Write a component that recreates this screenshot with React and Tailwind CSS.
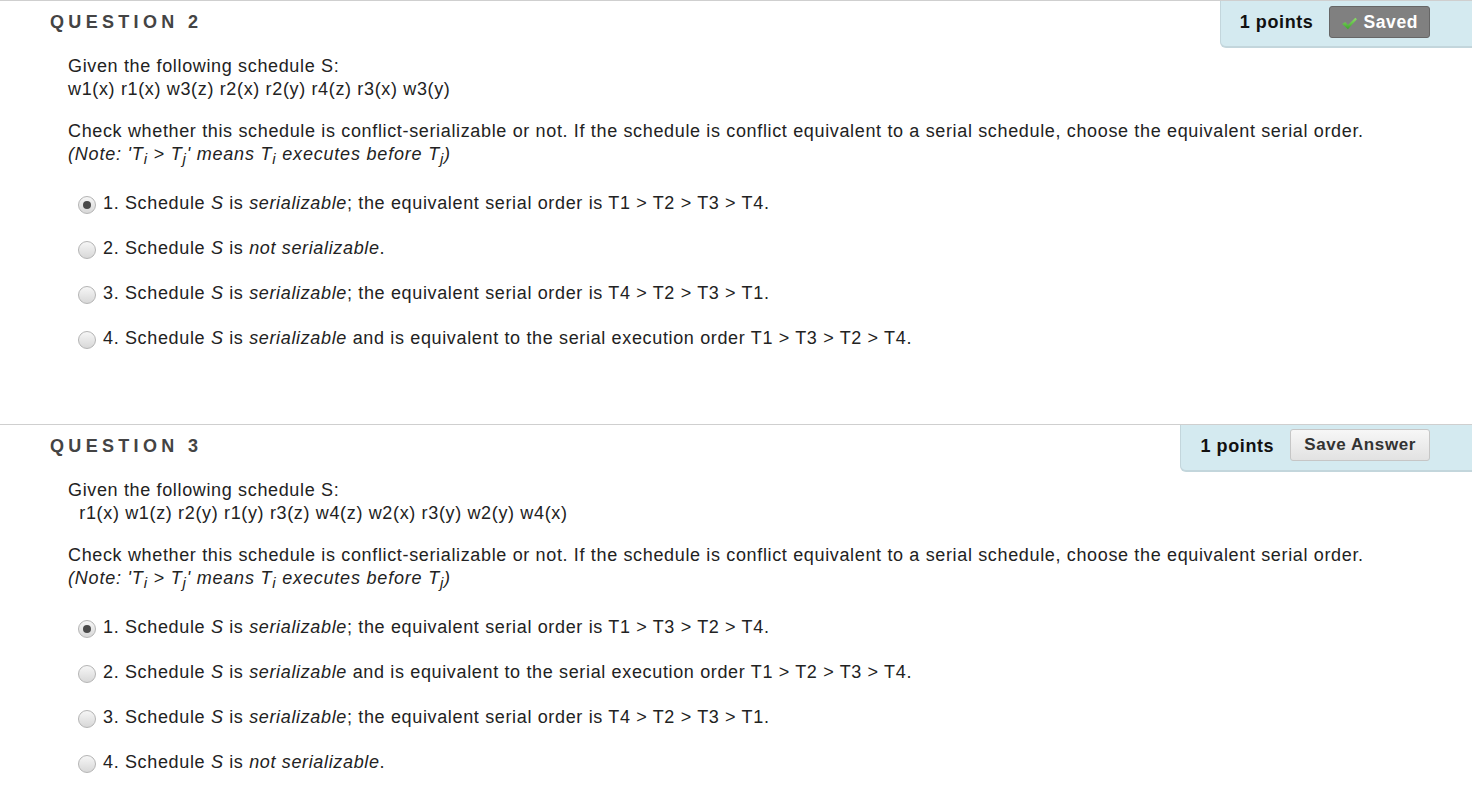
import { useState } from "react";

const font = { fontFamily: '"Liberation Sans", Arial, sans-serif' };

function Radio({ checked }) {
  return (
    <span className="mt-[4px] flex h-[18px] w-[18px] shrink-0 items-center justify-center rounded-full border border-[#b4b4b4] bg-gradient-to-b from-[#f6f6f6] to-[#d8d8d8]">
      {checked && <span className="h-[8px] w-[8px] rounded-full bg-[#4a4a4a]" />}
    </span>
  );
}

function Note() {
  return (
    <p className="italic tracking-[0.8px]">
      (Note: 'T<sub className="text-[15px]">i</sub> &gt; T<sub className="text-[15px]">j</sub>' means T
      <sub className="text-[15px]">i</sub> executes before T<sub className="text-[15px]">j</sub>)
    </p>
  );
}

function Check() {
  return (
    <svg width="17" height="15" viewBox="0 0 16 14" className="mr-[5px] mt-[2px]">
      <defs>
        <linearGradient id="chk" x1="0" y1="0" x2="0" y2="1">
          <stop offset="0" stopColor="#8fe06a" />
          <stop offset="1" stopColor="#3aa32a" />
        </linearGradient>
      </defs>
      <path d="M1 7.5 L4 5.5 L6.5 8.5 L13.5 1.5 L15 3 L6.5 12.5 Z" fill="url(#chk)" />
    </svg>
  );
}

function Question({ num, saved, schedule, options, selected }) {
  return (
    <section className="border-t border-[#cfcfcf]">
      <div className="flex items-start justify-between">
        <h2 className="pl-[50px] pt-[8px] text-[18px] font-bold tracking-[0.24em] text-[#444]">
          QUESTION {num}
        </h2>
        <div className="flex h-[47px] items-start gap-[16px] rounded-bl-[6px] border-b-2 border-l border-[#c3d6dc] bg-[#d4eaf0] pl-[19px] pr-[42px] tracking-[0.6px]">
          <span className="pt-[8px] text-[18px] font-bold text-[#111]">1 points</span>
          {saved ? (
            <button className="mt-[5px] flex h-[32px] items-center rounded-[3px] border border-[#666] bg-[#808080] px-[11px] text-[17.5px] font-bold tracking-[0.6px] text-white">
              <Check />
              Saved
            </button>
          ) : (
            <button className="mt-[4px] flex h-[32px] items-center rounded-[3px] border border-[#c6c6c6] bg-gradient-to-b from-[#f7f7f7] to-[#e2e2e2] px-[13px] text-[17px] font-bold tracking-[0.6px] text-[#333]">
              Save Answer
            </button>
          )}
        </div>
      </div>

      <div className="pl-[68px] pt-[7px] text-[18px] leading-[23px] tracking-[0.65px] text-[#222]">
        <p>Given the following schedule S:</p>
        <p className="whitespace-pre">{schedule}</p>
        <p className="mt-[19px]">
          Check whether this schedule is conflict-serializable or not. If the schedule is conflict equivalent to a serial
          schedule, choose the equivalent serial order.
        </p>
        <Note />
        <div className="mt-[26px] flex flex-col gap-[22px] pl-[10px]">
          {options.map((opt, i) => (
            <label key={i} className="flex gap-[7px]">
              <Radio checked={selected === i} />
              <span>{opt}</span>
            </label>
          ))}
        </div>
      </div>
    </section>
  );
}

export default function App() {
  const [sel2] = useState(0);
  const [sel3] = useState(0);

  const q2 = [
    <>1. Schedule <i>S</i> is <i>serializable</i>; the equivalent serial order is T1 &gt; T2 &gt; T3 &gt; T4.</>,
    <>2. Schedule <i>S</i> is <i>not serializable</i>.</>,
    <>3. Schedule <i>S</i> is <i>serializable</i>; the equivalent serial order is T4 &gt; T2 &gt; T3 &gt; T1.</>,
    <>4. Schedule <i>S</i> is <i>serializable</i> and is equivalent to the serial execution order T1 &gt; T3 &gt; T2 &gt; T4.</>,
  ];
  const q3 = [
    <>1. Schedule <i>S</i> is <i>serializable</i>; the equivalent serial order is T1 &gt; T3 &gt; T2 &gt; T4.</>,
    <>2. Schedule <i>S</i> is <i>serializable</i> and is equivalent to the serial execution order T1 &gt; T2 &gt; T3 &gt; T4.</>,
    <>3. Schedule <i>S</i> is <i>serializable</i>; the equivalent serial order is T4 &gt; T2 &gt; T3 &gt; T1.</>,
    <>4. Schedule <i>S</i> is <i>not serializable</i>.</>,
  ];

  return (
    <div className="min-h-screen bg-white" style={font}>
      <Question
        num={2}
        saved
        schedule="w1(x) r1(x) w3(z) r2(x) r2(y) r4(z) r3(x) w3(y)"
        options={q2}
        selected={sel2}
      />
      <div className="h-[74px]" />
      <Question
        num={3}
        schedule="  r1(x) w1(z) r2(y) r1(y) r3(z) w4(z) w2(x) r3(y) w2(y) w4(x)"
        options={q3}
        selected={sel3}
      />
    </div>
  );
}
